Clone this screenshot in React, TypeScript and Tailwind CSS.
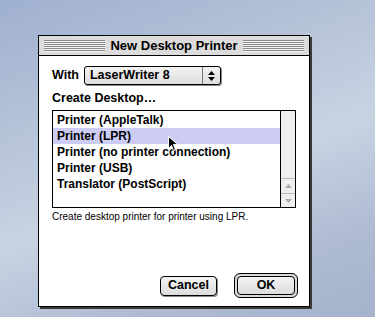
import { useState } from 'react';

const items = [
  'Printer (AppleTalk)',
  'Printer (LPR)',
  'Printer (no printer connection)',
  'Printer (USB)',
  'Translator (PostScript)',
];

const Stripes = () => (
  <div className="flex-1 h-[12px] bg-[repeating-linear-gradient(to_bottom,#8a8a8a_0px,#8a8a8a_1px,#f4f4f4_1px,#f4f4f4_2px)]" />
);

const App = () => {
  const [selected, setSelected] = useState(1);

  return (
    <div className="w-[375px] h-[317px] overflow-hidden bg-[linear-gradient(160deg,#9fb0cf_0%,#b9c6da_35%,#c8d3e2_55%,#aebbd3_80%,#a4b2cc_100%)] pt-[35px] pl-[38px] font-['Liberation_Sans',sans-serif]">
      {/* Dialog window */}
      <div className="relative w-[272px] h-[272px] border border-black bg-white shadow-[2px_2px_0_#3a3a3a] flex flex-col">
        <div className="h-[20px] bg-[#dcdcdc] border-b border-black flex items-center gap-[5px] px-[5px] shrink-0">
          <Stripes />
          <span className="text-[13px] font-bold text-black leading-none">New Desktop Printer</span>
          <Stripes />
        </div>

        <div className="flex flex-col pl-[13px] pr-[11px] pt-[10px] text-black">
          <div className="flex items-center gap-[5px]">
            <span className="text-[12.5px] font-bold">With</span>
            <div className="w-[137px] h-[19px] rounded-[3px] border border-black bg-[linear-gradient(#f2f2f2,#dedede)] shadow-[1px_1px_0_#888] flex items-center">
              <span className="flex-1 pl-[5px] text-[12.5px] font-bold leading-none">LaserWriter 8</span>
              <div className="w-[18px] h-full border-l border-[#777] flex flex-col items-center justify-center gap-[2px]">
                <svg width="7" height="4" viewBox="0 0 7 4"><path d="M3.5 0 L7 4 L0 4 Z" fill="#000" /></svg>
                <svg width="7" height="4" viewBox="0 0 7 4"><path d="M0 0 L7 0 L3.5 4 Z" fill="#000" /></svg>
              </div>
            </div>
          </div>

          <div className="mt-[5px] text-[12.5px] font-bold leading-[16px]">Create Desktop…</div>

          <div className="mt-[4px] w-[244px] h-[98px] border border-black flex">
            <div className="flex-1 pt-[1px]">
              {items.map((it, i) => (
                <div
                  key={it}
                  onClick={() => setSelected(i)}
                  className={`h-[16px] pl-[4px] text-[12px] font-bold leading-[16px] ${i === selected ? 'bg-[#ccccf4]' : ''}`}
                >
                  {it}
                </div>
              ))}
            </div>
            <div className="w-[15px] border-l border-black bg-[#eeeeee] flex flex-col justify-end">
              <div className="h-[15px] border-t border-[#bbbbbb] flex items-center justify-center">
                <svg width="7" height="4" viewBox="0 0 7 4"><path d="M3.5 0 L7 4 L0 4 Z" fill="#aaaaaa" /></svg>
              </div>
              <div className="h-[14px] border-t border-[#bbbbbb] flex items-center justify-center">
                <svg width="7" height="4" viewBox="0 0 7 4"><path d="M0 0 L7 0 L3.5 4 Z" fill="#aaaaaa" /></svg>
              </div>
            </div>
          </div>

          <div className="mt-[2px] text-[10px] leading-[14px]">Create desktop printer for printer using LPR.</div>

          <div className="mt-[49px] flex items-center justify-end gap-[17px]">
            <button className="w-[57px] h-[20px] rounded-[4px] border border-black bg-[linear-gradient(#f4f4f4,#dcdcdc)] shadow-[1px_1px_0_#888] text-[12.5px] font-bold leading-none">
              Cancel
            </button>
            <div className="w-[64px] h-[25px] rounded-[6px] border border-black bg-[#d8d8d8] p-[2px] flex">
              <button className="flex-1 rounded-[4px] border border-black bg-[linear-gradient(#f4f4f4,#dcdcdc)] text-[12.5px] font-bold leading-none">
                OK
              </button>
            </div>
          </div>
        </div>

        {/* mouse pointer */}
        <svg className="absolute left-[129px] top-[100px]" width="10" height="16" viewBox="0 0 10 16">
          <path d="M0.5 0.5 L0.5 12.5 L3.5 9.5 L5.5 14.5 L7.5 13.5 L5.5 8.5 L9.5 8.5 Z" fill="#000" stroke="#fff" strokeWidth="1" />
        </svg>
      </div>
    </div>
  );
};

export default App;
